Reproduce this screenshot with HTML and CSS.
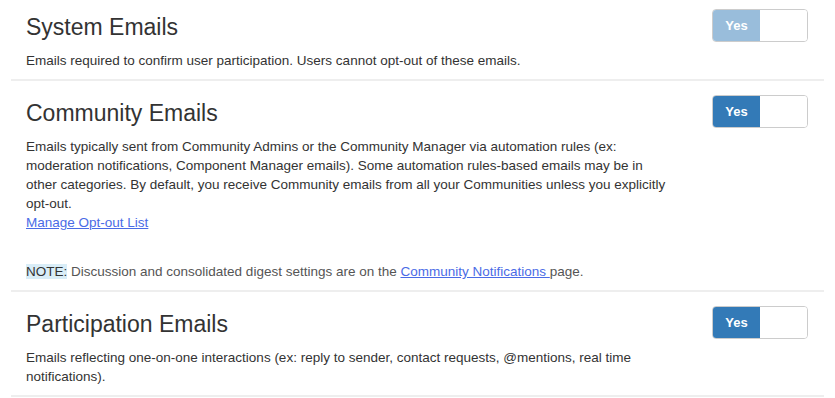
FILE: index.html
```html
<!DOCTYPE html>
<html lang="en">
<head>
<meta charset="utf-8">
<title>Email Preferences</title>
<link rel="stylesheet" href="styles.css">
</head>
<body>
<div class="page">
  <section class="pref">
    <div class="pref-body">
      <h3 class="pref-title">System Emails</h3>
      <p class="pref-desc">Emails required to confirm user participation. Users cannot opt-out of these emails.</p>
    </div>
    <div class="toggle toggle-disabled"><span class="toggle-on">Yes</span><span class="toggle-off"></span></div>
  </section>
  <section class="pref">
    <div class="pref-body">
      <h3 class="pref-title">Community Emails</h3>
      <p class="pref-desc">Emails typically sent from Community Admins or the Community Manager via automation rules (ex: moderation notifications, Component Manager emails). Some automation rules-based emails may be in other categories. By default, you receive Community emails from all your Communities unless you explicitly opt-out.<br><a class="link" href="#">Manage Opt-out List</a></p>
      <p class="pref-note"><span class="note-label">NOTE:</span> Discussion and consolidated digest settings are on the <a class="link" href="#">Community Notifications </a>page.</p>
    </div>
    <div class="toggle"><span class="toggle-on">Yes</span><span class="toggle-off"></span></div>
  </section>
  <section class="pref">
    <div class="pref-body">
      <h3 class="pref-title">Participation Emails</h3>
      <p class="pref-desc">Emails reflecting one-on-one interactions (ex: reply to sender, contact requests, @mentions, real time notifications).</p>
    </div>
    <div class="toggle"><span class="toggle-on">Yes</span><span class="toggle-off"></span></div>
  </section>
</div>
</body>
</html>
```
FILE: styles.css
```css
html, body {
  margin: 0;
  padding: 0;
  background: #fff;
}
body {
  font-family: "Liberation Sans", Arial, sans-serif;
  color: #333;
}
.page {
  margin: -5px 0 0 11px;
  width: 813px;
}
.pref {
  display: flex;
  justify-content: space-between;
  align-items: flex-start;
  border-bottom: 2px solid #eeeeee;
  padding: 19px 16px 9px 15px;
}
.pref-body {
  width: 650px;
}
.pref-title {
  margin: 0;
  font-size: 23px;
  line-height: 27px;
  font-weight: normal;
  color: #333;
}
.pref-desc {
  margin: 10px 0 0;
  font-size: 13.5px;
  line-height: 19px;
  color: #333;
}
.pref-note {
  margin: 30px 0 0;
  font-size: 13.5px;
  line-height: 19px;
  color: #555;
}
.note-label {
  background: #d9edf7;
  color: #333;
}
.link {
  color: #4a6be6;
  text-decoration: underline;
}
.toggle {
  margin-top: -5px;
  display: flex;
  width: 94px;
  height: 31px;
  border: 1px solid #ccc;
  border-radius: 4px;
  overflow: hidden;
  flex-shrink: 0;
}
.toggle-on {
  width: 47px;
  background: #337ab7;
  color: #fff;
  font-size: 13px;
  font-weight: bold;
  display: flex;
  align-items: center;
  justify-content: center;
}
.toggle-off {
  flex: 1;
  background: #fff;
}
.toggle-disabled .toggle-on {
  background: #99bddb;
}
```
